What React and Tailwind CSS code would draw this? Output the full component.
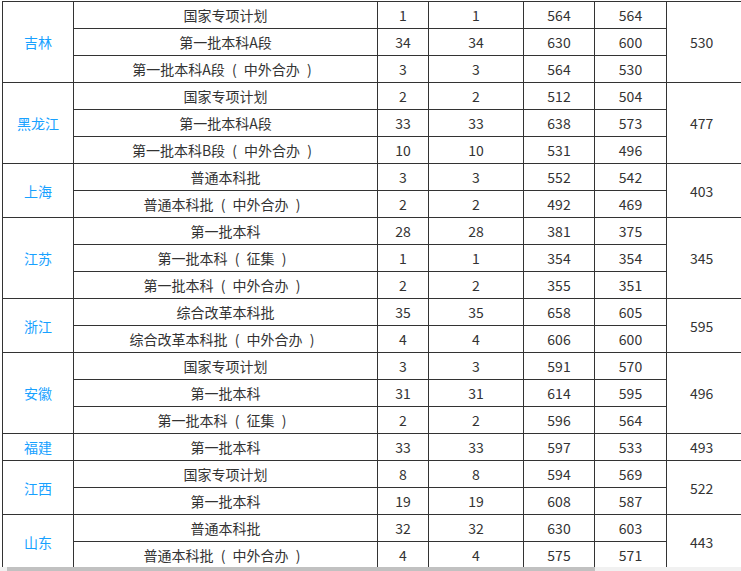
import React from 'react';

const groups = [
  { name: '吉林', last: '530', rows: [
    ['国家专项计划', '1', '1', '564', '564'],
    ['第一批本科A段', '34', '34', '630', '600'],
    ['第一批本科A段（中外合办）', '3', '3', '564', '530'],
  ] },
  { name: '黑龙江', last: '477', rows: [
    ['国家专项计划', '2', '2', '512', '504'],
    ['第一批本科A段', '33', '33', '638', '573'],
    ['第一批本科B段（中外合办）', '10', '10', '531', '496'],
  ] },
  { name: '上海', last: '403', rows: [
    ['普通本科批', '3', '3', '552', '542'],
    ['普通本科批（中外合办）', '2', '2', '492', '469'],
  ] },
  { name: '江苏', last: '345', rows: [
    ['第一批本科', '28', '28', '381', '375'],
    ['第一批本科（征集）', '1', '1', '354', '354'],
    ['第一批本科（中外合办）', '2', '2', '355', '351'],
  ] },
  { name: '浙江', last: '595', rows: [
    ['综合改革本科批', '35', '35', '658', '605'],
    ['综合改革本科批（中外合办）', '4', '4', '606', '600'],
  ] },
  { name: '安徽', last: '496', rows: [
    ['国家专项计划', '3', '3', '591', '570'],
    ['第一批本科', '31', '31', '614', '595'],
    ['第一批本科（征集）', '2', '2', '596', '564'],
  ] },
  { name: '福建', last: '493', rows: [
    ['第一批本科', '33', '33', '597', '533'],
  ] },
  { name: '江西', last: '522', rows: [
    ['国家专项计划', '8', '8', '594', '569'],
    ['第一批本科', '19', '19', '608', '587'],
  ] },
  { name: '山东', last: '443', rows: [
    ['普通本科批', '32', '32', '630', '603'],
    ['普通本科批（中外合办）', '4', '4', '575', '571'],
  ] },
];

const cell = 'border border-[#333] p-0 text-center align-middle h-[27px]';

// full-width parens get a wider, centred box like the original font
function Batch({ text }) {
  const parts = text.split(/([（）])/);
  return parts.map((p, i) =>
    p === '（' || p === '）'
      ? <span key={i} className="inline-block w-[19px] text-center">{p === '（' ? '(' : ')'}</span>
      : <span key={i}>{p}</span>
  );
}

export default function App() {
  return (
    <div
      className="w-[741px] h-[571px] bg-white flex flex-col overflow-hidden text-[14px] text-[#333] leading-[26px]"
      style={{ fontFamily: '"Microsoft YaHei", "Noto Sans CJK SC", sans-serif' }}
    >
      <div className="h-[567px] w-[741px] overflow-hidden pl-[2px] pt-[1px]">
        <table className="table-fixed border-collapse w-[784px] min-w-[784px]">
          <colgroup>
            <col className="w-[71px]" />
            <col className="w-[304px]" />
            <col className="w-[51px]" />
            <col className="w-[95px]" />
            <col className="w-[71px]" />
            <col className="w-[72px]" />
            <col className="w-[120px]" />
          </colgroup>
          <tbody>
            {groups.map(g =>
              g.rows.map((r, i) => (
                <tr key={g.name + i}>
                  {i === 0 && (
                    <td rowSpan={g.rows.length} className={`${cell} text-[#17a1ff]`}>{g.name}</td>
                  )}
                  <td className={cell}><Batch text={r[0]} /></td>
                  {r.slice(1).map((v, j) => (
                    <td key={j} className={cell}>{v}</td>
                  ))}
                  {i === 0 && (
                    <td rowSpan={g.rows.length} className={`${cell} border-r-0 !text-left pl-[23px]`}>{g.last}</td>
                  )}
                </tr>
              ))
            )}
          </tbody>
        </table>
      </div>
      <div className="h-[4px] bg-[#f1f1f1] flex">
        <div className="ml-[7px] w-[588px] h-full bg-[#c1c1c1]" />
      </div>
    </div>
  );
}
